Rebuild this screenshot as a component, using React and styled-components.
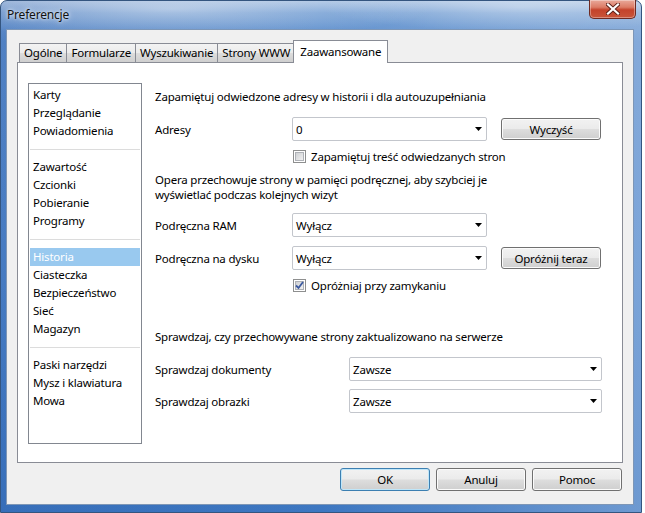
import React from 'react';
import styled, { createGlobalStyle, css } from 'styled-components';

const Global = createGlobalStyle`
  html, body { margin: 0; padding: 0; background: #fff; }
  body {
    font-family: "Segoe UI", "Noto Sans", "Open Sans", sans-serif;
    font-size: 11.5px;
    letter-spacing: -0.2px;
    color: #000;
  }
  * { box-sizing: border-box; }
`;

const Window = styled.div`
  width: 642px;
  height: 513px;
  display: flex;
  flex-direction: column;
  border: 1px solid #34557f;
  border-radius: 7px 7px 0 0;
  padding: 0 7px 7px 5px;
  background:
    radial-gradient(ellipse 260px 30px at 170px 8px, rgba(255,255,255,0.45), rgba(255,255,255,0) 100%),
    radial-gradient(ellipse 200px 24px at 520px 6px, rgba(255,255,255,0.35), rgba(255,255,255,0) 100%),
    linear-gradient(90deg, rgba(20,60,140,0.15) 0%, rgba(255,255,255,0) 50%, rgba(255,255,255,0.25) 100%),
    linear-gradient(180deg, #a7c1e2 0%, #6f9bd2 12px, #5b8dcd 40px, #4f86cb 55%, #3d77c1 100%);
`;

const TitleBar = styled.div`
  height: 28px;
  display: flex;
  justify-content: space-between;
  align-items: flex-start;
`;

const Title = styled.span`
  margin: 6px 0 0 1px;
  font-size: 12px;
  line-height: 16px;
  color: #111;
  text-shadow: 0 0 6px rgba(255,255,255,0.9), 0 0 3px rgba(255,255,255,0.8);
`;

const CloseButton = styled.div`
  width: 47px;
  height: 19px;
  margin: -1px -2px 0 0;
  border: 1px solid #6e2a22;
  border-top: none;
  border-radius: 0 0 5px 5px;
  background: linear-gradient(180deg, #e9a99a 0%, #dc7c66 40%, #c4432b 55%, #c8553a 100%);
  box-shadow: inset 0 0 0 1px rgba(255,255,255,0.35);
  display: flex;
  align-items: center;
  justify-content: center;
`;

const Client = styled.div`
  flex: 1;
  display: flex;
  flex-direction: column;
  background: #f0f0f0;
  border: 1px solid #7d96b6;
  padding: 10px 10px 13px 10px;
`;

const TabStrip = styled.div`
  display: flex;
  align-items: flex-end;
  height: 22px;
  padding-left: 3px;
  position: relative;
  z-index: 1;
`;

const Tab = styled.div`
  height: 19px;
  padding: 0 4px;
  line-height: 18px;
  border: 1px solid #898c95;
  border-bottom: none;
  margin-left: -1px;
  background: linear-gradient(180deg, #f3f3f3 0%, #ebebeb 50%, #dddddd 51%, #cfcfcf 100%);
  white-space: nowrap;
  ${(p) =>
    p.$active &&
    css`
      height: 23px;
      margin: 0 -2px -1px -2px;
      padding: 0 6px;
      line-height: 21px;
      background: #fff;
      position: relative;
      z-index: 2;
    `}
`;

const Panel = styled.div`
  flex: 1;
  display: flex;
  background: #fff;
  border: 1px solid #898c95;
  padding: 20px 0 18px 10px;
`;

const ListBox = styled.div`
  flex: 0 0 114px;
  border: 1px solid #828790;
  padding: 2px 1px;
  display: flex;
  flex-direction: column;
`;

const ListItem = styled.div`
  height: 18px;
  line-height: 18px;
  padding-left: 3px;
  white-space: nowrap;
  ${(p) =>
    p.$selected &&
    css`
      background: #99c9ef;
      color: #fff;
    `}
`;

const Separator = styled.div`
  height: 18px;
  display: flex;
  align-items: center;
  &::after {
    content: '';
    flex: 1;
    height: 1px;
    background: #dcdcdc;
  }
`;

const Content = styled.div`
  flex: 1;
  min-width: 0;
  display: flex;
  flex-direction: column;
  padding-left: 13px;
`;

const Heading = styled.div`
  line-height: 16px;
  white-space: nowrap;
  margin-top: ${(p) => p.$mt}px;
`;

const Para = styled.div`
  line-height: 15px;
  white-space: nowrap;
  margin-top: ${(p) => p.$mt}px;
`;

const Row = styled.div`
  display: grid;
  grid-template-columns: ${(p) => p.$label}px ${(p) => p.$select}px auto;
  column-gap: 14px;
  align-items: center;
  margin-top: ${(p) => p.$mt}px;
`;

const Select = styled.div`
  height: 24px;
  border: 1px solid #c3c6cc;
  border-radius: 2px;
  background: #fff;
  display: flex;
  align-items: center;
  justify-content: space-between;
  padding: 0 4px 0 3px;
`;

const Button = styled.div`
  height: ${(p) => p.$h || 22}px;
  width: ${(p) => p.$w || 100}px;
  border: 1px solid #707070;
  border-radius: 3px;
  background: linear-gradient(180deg, #f2f2f2 0%, #ebebeb 48%, #dddddd 52%, #cfcfcf 100%);
  box-shadow: inset 0 0 0 1px #fbfbfb;
  display: flex;
  align-items: center;
  justify-content: center;
  ${(p) =>
    p.$default &&
    css`
      border-color: #3c7fb1;
      box-shadow: inset 0 0 0 1px #bfe6f9;
    `}
`;

const CheckRow = styled.div`
  display: flex;
  align-items: center;
  gap: 5px;
  margin-left: 138px;
  margin-top: ${(p) => p.$mt}px;
  height: 16px;
`;

const Box = styled.div`
  width: 13px;
  height: 13px;
  border: 1px solid #8e8f8f;
  background: #fff;
  padding: 1px;
  display: flex;
`;

const BoxInner = styled.div`
  flex: 1;
  border: 1px solid #aeb1b6;
  background: linear-gradient(135deg, #cfd1d4 0%, #f0f0f0 100%);
  display: flex;
  align-items: center;
  justify-content: center;
`;

const Footer = styled.div`
  display: flex;
  justify-content: flex-end;
  gap: 6px;
  margin-top: 5px;
  padding-right: 1px;
`;

const Arrow = () => (
  <svg width="7" height="4" viewBox="0 0 7 4">
    <path d="M0 0 H7 L3.5 4 Z" fill="#000" />
  </svg>
);

const Checkbox = ({ checked }) => (
  <Box>
    <BoxInner>
      {checked && (
        <svg width="9" height="9" viewBox="0 0 9 9" style={{ margin: '-1px' }}>
          <path d="M1 4.5 L3.5 7 L8 1" fill="none" stroke="#3c5aa0" strokeWidth="1.8" />
        </svg>
      )}
    </BoxInner>
  </Box>
);

const DropDown = ({ value }) => (
  <Select>
    <span>{value}</span>
    <Arrow />
  </Select>
);

const groups = [
  ['Karty', 'Przeglądanie', 'Powiadomienia'],
  ['Zawartość', 'Czcionki', 'Pobieranie', 'Programy'],
  ['Historia', 'Ciasteczka', 'Bezpieczeństwo', 'Sieć', 'Magazyn'],
  ['Paski narzędzi', 'Mysz i klawiatura', 'Mowa'],
];

const tabs = ['Ogólne', 'Formularze', 'Wyszukiwanie', 'Strony WWW', 'Zaawansowane'];

export default function App() {
  return (
    <>
      <Global />
      <Window>
        <TitleBar>
          <Title>Preferencje</Title>
          <CloseButton>
            <svg width="14" height="12" viewBox="0 0 14 12">
              <path d="M2 1.5 L12 10.5 M12 1.5 L2 10.5" stroke="#5a1f17" strokeWidth="4" strokeLinecap="square" />
              <path d="M2 1.5 L12 10.5 M12 1.5 L2 10.5" stroke="#fff" strokeWidth="2.2" strokeLinecap="square" />
            </svg>
          </CloseButton>
        </TitleBar>
        <Client>
          <TabStrip>
            {tabs.map((t) => (
              <Tab key={t} $active={t === 'Zaawansowane'}>
                {t}
              </Tab>
            ))}
          </TabStrip>
          <Panel>
            <ListBox>
              {groups.map((g, gi) => (
                <React.Fragment key={gi}>
                  {gi > 0 && <Separator />}
                  {g.map((item) => (
                    <ListItem key={item} $selected={item === 'Historia'}>
                      {item}
                    </ListItem>
                  ))}
                </React.Fragment>
              ))}
            </ListBox>
            <Content>
              <Heading $mt={6}>Zapamiętuj odwiedzone adresy w historii i dla autouzupełniania</Heading>
              <Row $label={123} $select={195} $mt={12}>
                <span>Adresy</span>
                <DropDown value="0" />
                <Button>Wyczyść</Button>
              </Row>
              <CheckRow $mt={7}>
                <Checkbox />
                <span>Zapamiętuj treść odwiedzanych stron</span>
              </CheckRow>
              <Para $mt={8}>
                Opera przechowuje strony w pamięci podręcznej, aby szybciej je
                <br />
                wyświetlać podczas kolejnych wizyt
              </Para>
              <Row $label={123} $select={195} $mt={11}>
                <span>Podręczna RAM</span>
                <DropDown value="Wyłącz" />
              </Row>
              <Row $label={123} $select={195} $mt={9}>
                <span>Podręczna na dysku</span>
                <DropDown value="Wyłącz" />
                <Button>Opróżnij teraz</Button>
              </Row>
              <CheckRow $mt={7}>
                <Checkbox checked />
                <span>Opróżniaj przy zamykaniu</span>
              </CheckRow>
              <Heading $mt={36}>Sprawdzaj, czy przechowywane strony zaktualizowano na serwerze</Heading>
              <Row $label={180} $select={253} $mt={12}>
                <span>Sprawdzaj dokumenty</span>
                <DropDown value="Zawsze" />
              </Row>
              <Row $label={180} $select={253} $mt={8}>
                <span>Sprawdzaj obrazki</span>
                <DropDown value="Zawsze" />
              </Row>
            </Content>
          </Panel>
          <Footer>
            <Button $w={90} $h={23} $default>OK</Button>
            <Button $w={90} $h={23}>Anuluj</Button>
            <Button $w={90} $h={23}>Pomoc</Button>
          </Footer>
        </Client>
      </Window>
    </>
  );
}
